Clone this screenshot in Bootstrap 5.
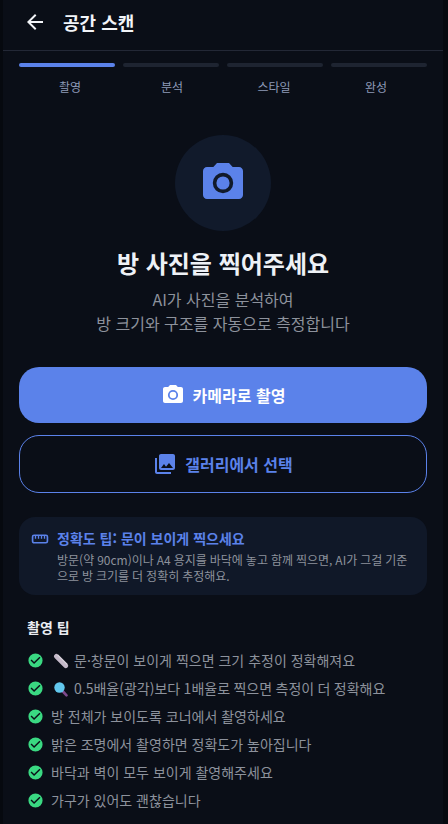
<!DOCTYPE html>
<html lang="ko">
<head>
<meta charset="utf-8">
<meta name="viewport" content="width=device-width, initial-scale=1">
<link rel="stylesheet" href="https://cdn.jsdelivr.net/npm/bootstrap@5.3.0/dist/css/bootstrap.min.css">
<style>
html,body{height:100%;overflow:hidden}
body{background:#06090f;font-family:"Noto Sans CJK KR","Noto Sans",sans-serif;color:#e9ecf1}
.shell{width:440px;height:824px;margin-left:3px;background:#0a0e17;overflow:hidden}
.topbar{height:51px;padding:0 20px 6px;border-bottom:1px solid #232836;gap:16px;flex:none}
.topbar h1{font-size:18px;font-weight:700;margin:0;color:#f2f4f8;line-height:24px}
.steps{padding:12px 16px 0;flex:none}
.stepbars{gap:8px}
.stepbar{flex:1 1 0;height:4px;border-radius:2px;background:#1e2431}
.stepbar.on{background:#5b82ea}
.steplabels{margin-top:11px}
.steplabels span{flex:1 1 0;text-align:center;font-size:12px;line-height:18px;color:#8e9ab8}
.hero{padding-top:39px;flex:none}
.herocirc{width:96px;height:96px;border-radius:50%;background:#111a2b;margin-bottom:14px}
.hero h2{font-size:24px;font-weight:700;line-height:36px;margin:0 0 6px;color:#eef1f6}
.hero p{font-size:16px;line-height:24px;color:#8d929c;margin:0}
.btnmain,.btnline{flex:none;height:56px;border-radius:20px;font-size:16px;font-weight:700;gap:8px;margin:0 16px}
.btnmain{background:#5b82ea;color:#fff;border:0;margin-top:32px}
.btnline{background:transparent;color:#5b82ea;border:1px solid #5b82ea;height:58px;margin-top:12px}
.infobox{flex:none;margin:24px 16px 0;padding:11px 12px;background:#101828;border-radius:16px;gap:8px}
.infobox svg{margin-top:2px}
.infobox h3{font-size:14px;font-weight:700;color:#5b82ea;line-height:21px;margin:0 0 3px}
.infobox p{font-size:12px;line-height:16px;color:#8d929c;margin:0;word-spacing:-.4px}
.tips{padding:22px 24px 0}
.tips h4{font-size:14px;font-weight:700;color:#e9ecf1;line-height:21px;margin:0 0 8px}
.tips li{height:28px;gap:7px;font-size:14px;color:#8d929c}
.tips li.tight{word-spacing:-.5px}
.emo{margin:0 5px 0 2px;vertical-align:-3px}
</style>
</head>
<body>
<div class="shell d-flex flex-column">
  <header class="topbar d-flex align-items-center">
    <svg width="24" height="24" viewBox="0 0 24 24" fill="#f2f4f8"><path d="M20 11H7.830l5.590-5.590L12 4l-8 8 8 8 1.410-1.410L7.830 13H20z"/></svg>
    <h1>공간 스캔</h1>
  </header>
  <div class="steps">
    <div class="stepbars d-flex"><div class="stepbar on"></div><div class="stepbar"></div><div class="stepbar"></div><div class="stepbar"></div></div>
    <div class="steplabels d-flex"><span>촬영</span><span>분석</span><span>스타일</span><span>완성</span></div>
  </div>
  <div class="hero d-flex flex-column align-items-center text-center">
    <div class="herocirc d-flex align-items-center justify-content-center">
      <svg width="48" height="48" viewBox="0 0 24 24"><path fill="#5b82ea" d="M9 2 7.170 4H4c-1.100 0-2 .9-2 2v12c0 1.100.9 2 2 2h16c1.100 0 2-.9 2-2V6c0-1.100-.9-2-2-2h-3.170L15 2z"/><circle cx="12" cy="12" r="4.200" fill="none" stroke="#111a2b" stroke-width="1.800"/></svg>
    </div>
    <h2>방 사진을 찍어주세요</h2>
    <p>AI가 사진을 분석하여<br>방 크기와 구조를 자동으로 측정합니다</p>
  </div>
  <button type="button" class="btn btnmain d-flex align-items-center justify-content-center">
    <svg width="24" height="24" viewBox="0 0 24 24"><path fill="#fff" d="M9 2 7.170 4H4c-1.100 0-2 .9-2 2v12c0 1.100.9 2 2 2h16c1.100 0 2-.9 2-2V6c0-1.100-.9-2-2-2h-3.170L15 2z"/><circle cx="12" cy="12" r="4.200" fill="none" stroke="#5b82ea" stroke-width="1.800"/></svg>
    카메라로 촬영
  </button>
  <button type="button" class="btn btnline d-flex align-items-center justify-content-center">
    <svg width="24" height="24" viewBox="0 0 24 24" fill="#5b82ea"><path d="M22 16V4c0-1.100-.9-2-2-2H8c-1.100 0-2 .9-2 2v12c0 1.100.9 2 2 2h12c1.100 0 2-.9 2-2zm-11-4 2.030 2.710L16 11l4 5H8l3-4zM2 6v14c0 1.100.9 2 2 2h14v-2H4V6H2z"/></svg>
    갤러리에서 선택
  </button>
  <div class="infobox d-flex">
    <svg class="flex-shrink-0" width="18" height="18" viewBox="0 0 24 24" fill="none" stroke="#5b82ea" stroke-width="2.200"><rect x="2.100" y="7" width="19.800" height="10" rx="2"/><path stroke-width="1.800" d="M6 7v4.500M10 7v4.500M14 7v4.500M18 7v4.500"/></svg>
    <div>
      <h3>정확도 팁: 문이 보이게 찍으세요</h3>
      <p>방문(약 90cm)이나 A4 용지를 바닥에 놓고 함께 찍으면, AI가 그걸 기준으로 방 크기를 더 정확히 추정해요.</p>
    </div>
  </div>
  <div class="tips">
    <h4>촬영 팁</h4>
    <ul class="list-unstyled m-0">
      <li class="d-flex align-items-center"><svg width="17" height="17" viewBox="0 0 24 24" fill="#3ad982"><path fill-rule="evenodd" d="M12 2a10 10 0 1 0 0 20 10 10 0 0 0 0-20zm-2 15-5-5 1.410-1.410L10 14.170l7.590-7.590L19 8z"/></svg><span><svg class="emo" width="16" height="16" viewBox="0 0 16 16"><path d="M3.300 3.300 12.800 12.800" stroke="#c4b9c9" stroke-width="4.600" stroke-linecap="round"/><path d="M4.500 1.800 14.300 11.500" stroke="#d8d2da" stroke-width="1.200"/></svg>문·창문이 보이게 찍으면 크기 추정이 정확해져요</span></li>
      <li class="d-flex align-items-center tight"><svg width="17" height="17" viewBox="0 0 24 24" fill="#3ad982"><path fill-rule="evenodd" d="M12 2a10 10 0 1 0 0 20 10 10 0 0 0 0-20zm-2 15-5-5 1.410-1.410L10 14.170l7.590-7.590L19 8z"/></svg><span><svg class="emo" width="16" height="16" viewBox="0 0 16 16"><path d="M9.500 10 13.500 14.300" stroke="#7d4a8c" stroke-width="2.600" stroke-linecap="round"/><circle cx="6.500" cy="6.500" r="5.200" fill="#62c8ee"/></svg>0.5배율(광각)보다 1배율로 찍으면 측정이 더 정확해요</span></li>
      <li class="d-flex align-items-center"><svg width="17" height="17" viewBox="0 0 24 24" fill="#3ad982"><path fill-rule="evenodd" d="M12 2a10 10 0 1 0 0 20 10 10 0 0 0 0-20zm-2 15-5-5 1.410-1.410L10 14.170l7.590-7.590L19 8z"/></svg><span>방 전체가 보이도록 코너에서 촬영하세요</span></li>
      <li class="d-flex align-items-center"><svg width="17" height="17" viewBox="0 0 24 24" fill="#3ad982"><path fill-rule="evenodd" d="M12 2a10 10 0 1 0 0 20 10 10 0 0 0 0-20zm-2 15-5-5 1.410-1.410L10 14.170l7.590-7.590L19 8z"/></svg><span>밝은 조명에서 촬영하면 정확도가 높아집니다</span></li>
      <li class="d-flex align-items-center"><svg width="17" height="17" viewBox="0 0 24 24" fill="#3ad982"><path fill-rule="evenodd" d="M12 2a10 10 0 1 0 0 20 10 10 0 0 0 0-20zm-2 15-5-5 1.410-1.410L10 14.170l7.590-7.590L19 8z"/></svg><span>바닥과 벽이 모두 보이게 촬영해주세요</span></li>
      <li class="d-flex align-items-center"><svg width="17" height="17" viewBox="0 0 24 24" fill="#3ad982"><path fill-rule="evenodd" d="M12 2a10 10 0 1 0 0 20 10 10 0 0 0 0-20zm-2 15-5-5 1.410-1.410L10 14.170l7.590-7.590L19 8z"/></svg><span>가구가 있어도 괜찮습니다</span></li>
    </ul>
  </div>
</div>
<script src="https://cdn.jsdelivr.net/npm/bootstrap@5.3.0/dist/js/bootstrap.bundle.min.js"></script>
</body>
</html>
